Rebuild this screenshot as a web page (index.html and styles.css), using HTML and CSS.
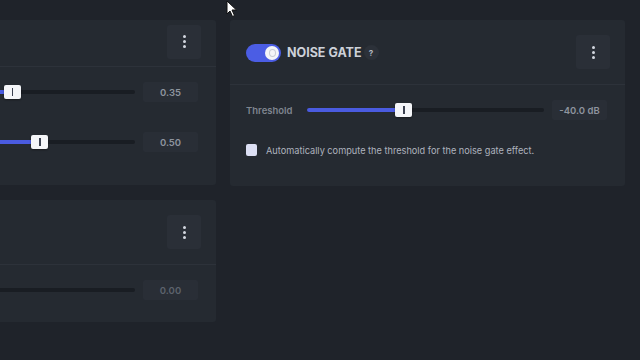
FILE: index.html
```html
<!DOCTYPE html>
<html lang="en">
<head>
  <meta charset="UTF-8" />
  <title>Audio Effects</title>
  <link rel="stylesheet" href="styles.css">
</head>
<body>
  <div class="board">
    <div class="column">
      <!-- panels scrolled off to the left, their labels are out of view -->
      <section class="panel">
        <div class="panel-head short">
          <button class="menu-btn"><span></span><span></span><span></span></button>
        </div>
        <div class="panel-body rows">
          <div class="param">
            <span class="param-label"></span>
            <div class="slider"><div class="fill" style="width: 48.5%"></div><div class="thumb" style="left: 48.5%"></div></div>
            <div class="value">0.35</div>
          </div>
          <div class="param">
            <span class="param-label"></span>
            <div class="slider"><div class="fill" style="width: 60%"></div><div class="thumb" style="left: 60%"></div></div>
            <div class="value">0.50</div>
          </div>
        </div>
      </section>

      <section class="panel">
        <div class="panel-head">
          <button class="menu-btn"><span></span><span></span><span></span></button>
        </div>
        <div class="panel-body last">
          <div class="param off">
            <span class="param-label"></span>
            <div class="slider"></div>
            <div class="value">0.00</div>
          </div>
        </div>
      </section>
    </div>

    <div class="column">
      <section class="panel">
        <div class="panel-head">
          <div class="title">
            <span class="toggle on"><span class="knob"></span></span>
            <h2>NOISE GATE</h2>
            <span class="help">?</span>
          </div>
          <button class="menu-btn"><span></span><span></span><span></span></button>
        </div>
        <div class="panel-body gate">
          <div class="param">
            <span class="param-label">Threshold</span>
            <div class="slider"><div class="fill" style="width: 41%"></div><div class="thumb" style="left: 41%"></div></div>
            <div class="value">-40.0 dB</div>
          </div>
          <label class="check">
            <span class="box"></span>
            Automatically compute the threshold for the noise gate effect.
          </label>
        </div>
      </section>
    </div>
  </div>

  <svg class="cursor" width="12" height="18" viewBox="0 0 12 18">
    <path d="M1 1 L1 14 L4 11 L6.5 16.5 L8.5 15.5 L6 10 L10.5 10 Z" fill="#fff" stroke="#111" stroke-width="1"/>
  </svg>
</body>
</html>
```

FILE: styles.css
```css
body {
  margin: 0;
  background-color: #1f232a;
  font-family: 'Inter', 'Noto Sans', sans-serif;
  color: #c9cdd5;
  overflow: hidden;
  height: 360px;
}

.board {
  display: grid;
  grid-template-columns: 395px 395px;
  gap: 14px;
  margin-left: -179px;
  padding-top: 20px;
  align-items: start;
}

.column {
  display: flex;
  flex-direction: column;
  gap: 15px;
}

.panel {
  background-color: #252a31;
  border-radius: 3px;
}

.panel-head {
  height: 65px;
  display: flex;
  align-items: center;
  justify-content: space-between;
  padding: 0 15px;
  border-bottom: 1px solid #2d323a;
  box-sizing: border-box;
}

.panel-head.short {
  height: 47px;
  justify-content: flex-end;
  padding-bottom: 3px;
}

.panel-head .menu-btn {
  margin-left: auto;
}

.menu-btn {
  width: 34px;
  height: 34px;
  background-color: #2a2f37;
  border: none;
  border-radius: 3px;
  display: flex;
  flex-direction: column;
  align-items: center;
  justify-content: center;
  gap: 2px;
  padding: 0;
}

.menu-btn span {
  width: 3px;
  height: 3px;
  border-radius: 50%;
  background-color: #d3d7df;
}

.title {
  display: flex;
  align-items: center;
  margin-top: 1px;
  margin-left: 1px;
}

.toggle {
  width: 35px;
  height: 18px;
  border-radius: 9px;
  background-color: #3f4550;
  position: relative;
}

.toggle.on {
  background-color: #4b5de4;
}

.knob {
  position: absolute;
  top: 2px;
  right: 2px;
  width: 14px;
  height: 14px;
  border-radius: 50%;
  background-color: #f4f5f8;
}

.knob::after {
  content: '';
  position: absolute;
  left: 4px;
  top: 3px;
  width: 5px;
  height: 6px;
  border: 1px solid #c8ccd6;
  border-radius: 50%;
}

.title h2 {
  margin: 0 0 0 6px;
  font-size: 12.5px;
  font-weight: 700;
  color: #cdd1d9;
}

.help {
  margin-left: 2px;
  width: 15px;
  height: 15px;
  border-radius: 50%;
  background-color: #2c3139;
  color: #b5bac4;
  font-size: 8px;
  font-weight: 700;
  display: flex;
  align-items: center;
  justify-content: center;
}

.panel-body {
  padding: 15px 18px 27px 16px;
  display: flex;
  flex-direction: column;
  gap: 20px;
}

.panel-body.rows {
  padding-top: 15px;
  padding-bottom: 33px;
  gap: 30px;
}

.panel-body.last {
  padding-top: 15px;
  padding-bottom: 22px;
}

.panel-body.gate {
  gap: 24px;
  padding-bottom: 30px;
}

.param {
  display: flex;
  align-items: center;
  height: 20px;
}

.param-label {
  width: 61px;
  font-size: 9.5px;
  font-weight: 600;
  color: #7f858f;
}

.slider {
  position: relative;
  width: 237px;
  height: 4px;
  background-color: #191d23;
  border-radius: 2px;
}

.fill {
  position: absolute;
  left: 0;
  top: 0;
  bottom: 0;
  background-color: #4a5be0;
  border-radius: 2px;
}

.thumb {
  position: absolute;
  top: -5px;
  width: 17px;
  height: 14px;
  margin-left: -9px;
  background-color: #f4f5f8;
  border-radius: 2px;
  box-shadow: 0 1px 2px rgba(0,0,0,0.4);
}

.thumb::after {
  content: '';
  position: absolute;
  left: 8px;
  top: 3px;
  width: 1.5px;
  height: 8px;
  background-color: #3b4150;
}

.value {
  margin-left: auto;
  width: 55px;
  height: 20px;
  background-color: #292e36;
  border-radius: 2px;
  display: flex;
  align-items: center;
  justify-content: center;
  font-size: 9.5px;
  font-weight: 600;
  color: #8e949e;
}

.param.off .value {
  color: #5d636d;
}

.check {
  display: flex;
  align-items: center;
  gap: 9px;
  font-size: 9.2px;
  color: #aeb3be;
}

.check .box {
  width: 11px;
  height: 12px;
  border-radius: 2px;
  background-color: #dcdff4;
}

.cursor {
  position: absolute;
  left: 226px;
  top: 0;
}
```
